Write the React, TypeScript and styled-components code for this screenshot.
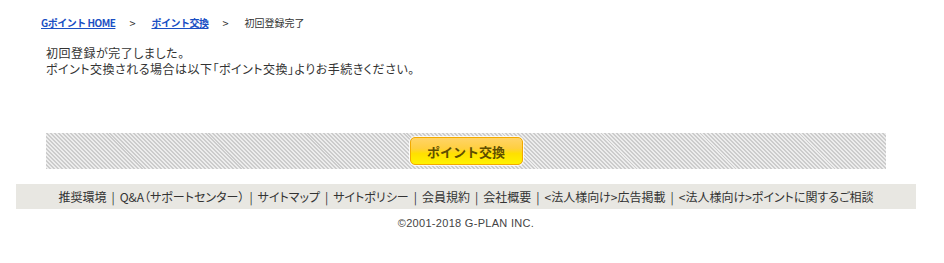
import React from 'react';
import styled, { createGlobalStyle } from 'styled-components';

const footerLinks = [
  '推奨環境',
  'Q&A（サポートセンター）',
  'サイトマップ',
  'サイトポリシー',
  '会員規約',
  '会社概要',
  '<法人様向け>広告掲載',
  '<法人様向け>ポイントに関するご相談',
];

const App: React.FC = () => {
  return (
    <>
      <GlobalStyle />
      <Page>
        <Breadcrumb>
          <CrumbLink href="#">Gポイント HOME</CrumbLink>
          <Sep>&gt;</Sep>
          <CrumbLink href="#">ポイント交換</CrumbLink>
          <Sep>&gt;</Sep>
          <Current>初回登録完了</Current>
        </Breadcrumb>

        <Message>
          初回登録が完了しました。
          <br />
          ポイント交換される場合は以下「ポイント交換」よりお手続きください。
        </Message>

        <ActionBar>
          <ExchangeButton type="button">ポイント交換</ExchangeButton>
        </ActionBar>

        <FooterNav>
          {footerLinks.map((label, i) => (
            <React.Fragment key={label}>
              {i > 0 && <Pipe>|</Pipe>}
              <FooterLink href="#">{label}</FooterLink>
            </React.Fragment>
          ))}
        </FooterNav>

        <Copyright>©2001-2018 G-PLAN INC.</Copyright>
      </Page>
    </>
  );
};

const GlobalStyle = createGlobalStyle`
  html, body {
    margin: 0;
    padding: 0;
    background: #fff;
  }
  body {
    font-family: "Noto Sans CJK JP", "Liberation Sans", sans-serif;
    color: #333;
  }
`;

const Page = styled.div`
  width: 900px;
  margin-left: 16px;
  padding-top: 16px;
`;

const Breadcrumb = styled.div`
  display: flex;
  align-items: center;
  padding-left: 25px;
  height: 14px;
  font-size: 10px;
  line-height: 14px;
`;

const CrumbLink = styled.a`
  color: #1a4fc4;
  font-weight: bold;
  text-decoration: underline;
  letter-spacing: -0.5px;
`;

const Sep = styled.span`
  margin: 0 16px 0 14px;
  color: #333;
  font-size: 11px;
`;

const Current = styled.span`
  color: #333;
`;

const Message = styled.p`
  margin: 15px 0 0 30px;
  font-size: 12px;
  line-height: 16px;
  color: #333;
  font-feature-settings: "palt";
  letter-spacing: 0.5px;
`;

const ActionBar = styled.div`
  margin: 56px 0 0 30px;
  width: 840px;
  height: 36px;
  display: flex;
  align-items: center;
  justify-content: center;
  background: repeating-linear-gradient(
    45deg,
    #cccccc 0px,
    #cccccc 1.4px,
    #ededed 1.4px,
    #ededed 2.8px
  );
`;

const ExchangeButton = styled.button`
  width: 113px;
  height: 28px;
  border: 1px solid #f2a900;
  border-radius: 5px;
  background: linear-gradient(to bottom, #ffd468 0%, #ffcf40 40%, #ffe000 60%, #fff200 100%);
  box-shadow: 0 0 0 1px rgba(255, 255, 255, 0.8);
  color: #5e4e00;
  font-family: "Noto Sans CJK JP", sans-serif;
  font-size: 13px;
  font-weight: bold;
  padding: 0;
  cursor: pointer;
`;

const FooterNav = styled.div`
  margin-top: 15px;
  height: 25px;
  background: #e8e7e2;
  display: flex;
  align-items: center;
  justify-content: center;
  font-size: 12px;
  font-feature-settings: "palt";
`;

const FooterLink = styled.a`
  color: #333;
  text-decoration: none;
`;

const Pipe = styled.span`
  margin: 0 5px;
  color: #333;
`;

const Copyright = styled.div`
  margin-top: 8px;
  text-align: center;
  font-family: "Liberation Sans", sans-serif;
  font-size: 11px;
  line-height: 13px;
  color: #444;
  letter-spacing: 0.3px;
`;

export default App;
